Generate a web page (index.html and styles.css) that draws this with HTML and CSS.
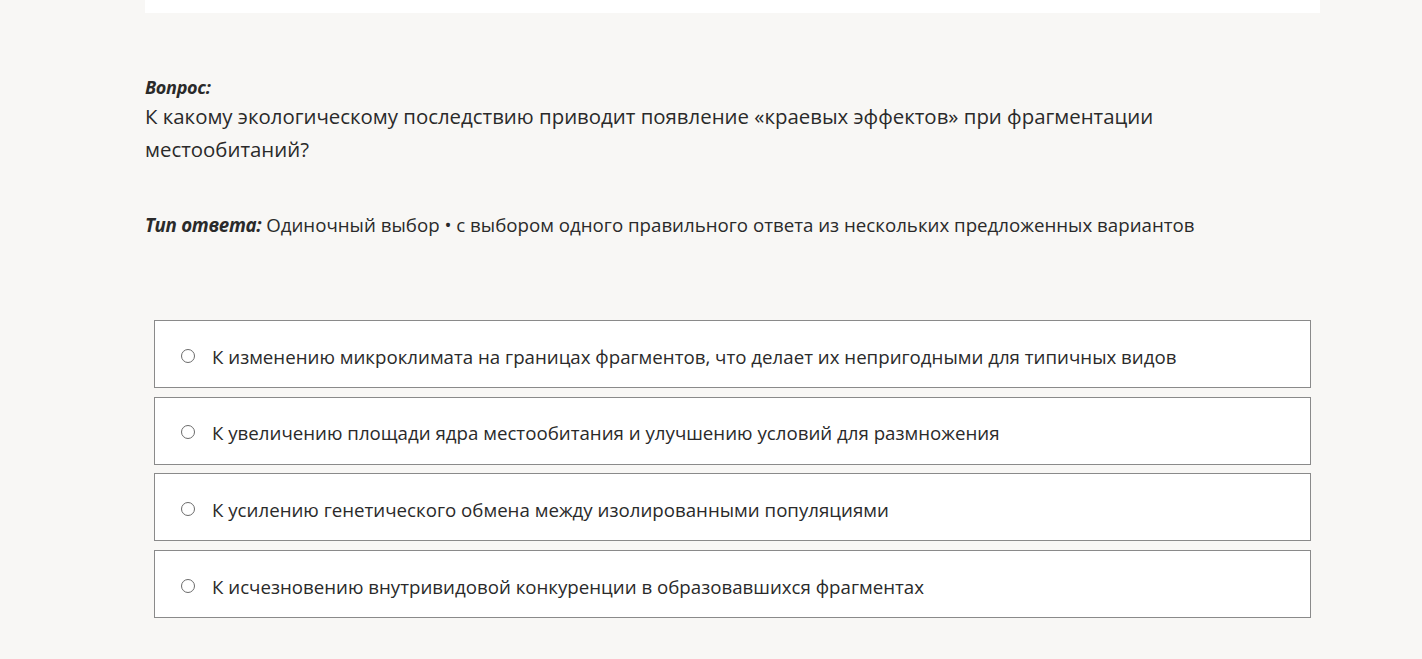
FILE: index.html
```html
<!DOCTYPE html>
<html lang="ru">
<head>
<meta charset="utf-8">
<link rel="stylesheet" href="styles.css">
</head>
<body>
<div class="page">
  <div class="top-card"></div>
  <section class="question">
    <div class="q-label">Вопрос:</div>
    <div class="q-text">К какому экологическому последствию приводит появление «краевых эффектов» при фрагментации местообитаний?</div>
  </section>
  <div class="answer-type"><span class="at-label">Тип ответа:</span> Одиночный выбор • с выбором одного правильного ответа из нескольких предложенных вариантов</div>
  <ul class="options">
    <li class="option"><span class="radio"></span><span class="opt-text">К изменению микроклимата на границах фрагментов, что делает их непригодными для типичных видов</span></li>
    <li class="option"><span class="radio"></span><span class="opt-text">К увеличению площади ядра местообитания и улучшению условий для размножения</span></li>
    <li class="option"><span class="radio"></span><span class="opt-text">К усилению генетического обмена между изолированными популяциями</span></li>
    <li class="option"><span class="radio"></span><span class="opt-text">К исчезновению внутривидовой конкуренции в образовавшихся фрагментах</span></li>
  </ul>
</div>
</body>
</html>
```
FILE: styles.css
```css
html, body {
  margin: 0;
  padding: 0;
  background: #f8f7f5;
}
body {
  font-family: "Open Sans", "Noto Sans", sans-serif;
  color: #2a2a2a;
}
.page {
  margin-left: 145px;
  width: 1175px;
}
.top-card {
  height: 13px;
  background: #ffffff;
}
.question {
  padding-top: 61px;
}
.q-label {
  font-size: 18px;
  font-weight: 700;
  font-style: italic;
  line-height: 26px;
  letter-spacing: -0.3px;
}
.q-text {
  font-size: 20.4px;
  line-height: 33px;
  max-width: 1040px;
}
.answer-type {
  margin-top: 46px;
  font-size: 18.7px;
  line-height: 26px;
}
.at-label {
  font-weight: 700;
  font-style: italic;
  letter-spacing: -0.3px;
}
.options {
  list-style: none;
  margin: 82px 9px 0;
  padding: 0;
  display: flex;
  flex-direction: column;
  gap: 8.7px;
}
.option {
  display: flex;
  align-items: center;
  height: 66px;
  background: #ffffff;
  border: 1px solid #8a8a8a;
  padding-left: 26px;
}
.radio {
  width: 12px;
  height: 12px;
  border: 1px solid #6b6b6b;
  border-radius: 50%;
  margin-right: 17px;
  flex: none;
  margin-top: 3px;
}
.opt-text {
  font-size: 18.7px;
  line-height: 26px;
  padding-top: 5px;
}
```
